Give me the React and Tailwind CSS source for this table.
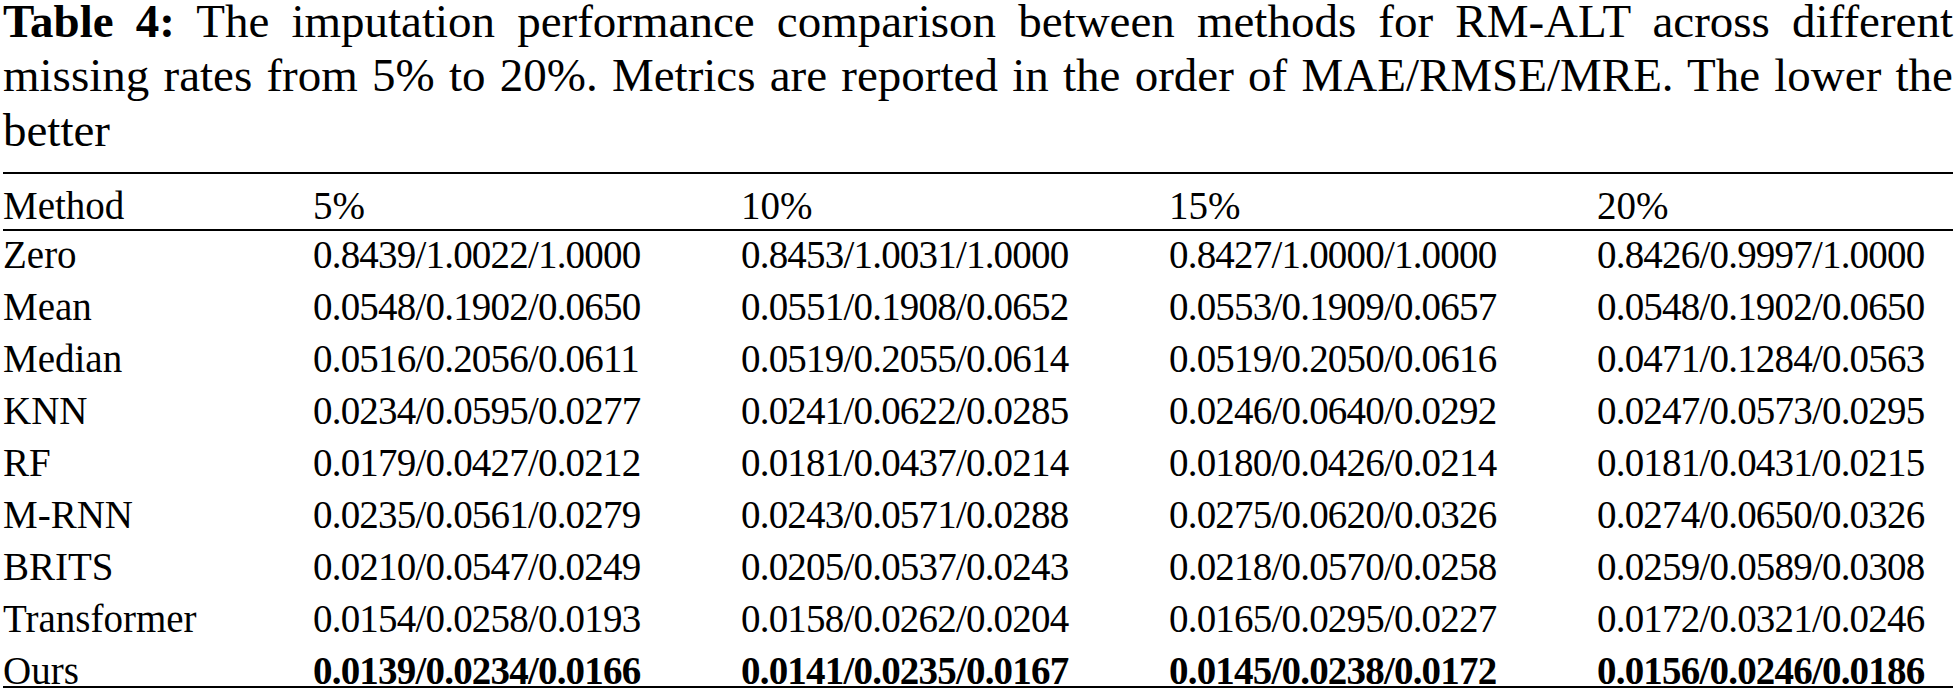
import React from 'react';

const rows = [
    ['Zero', '0.8439/1.0022/1.0000', '0.8453/1.0031/1.0000', '0.8427/1.0000/1.0000', '0.8426/0.9997/1.0000'],
    ['Mean', '0.0548/0.1902/0.0650', '0.0551/0.1908/0.0652', '0.0553/0.1909/0.0657', '0.0548/0.1902/0.0650'],
    ['Median', '0.0516/0.2056/0.0611', '0.0519/0.2055/0.0614', '0.0519/0.2050/0.0616', '0.0471/0.1284/0.0563'],
    ['KNN', '0.0234/0.0595/0.0277', '0.0241/0.0622/0.0285', '0.0246/0.0640/0.0292', '0.0247/0.0573/0.0295'],
    ['RF', '0.0179/0.0427/0.0212', '0.0181/0.0437/0.0214', '0.0180/0.0426/0.0214', '0.0181/0.0431/0.0215'],
    ['M-RNN', '0.0235/0.0561/0.0279', '0.0243/0.0571/0.0288', '0.0275/0.0620/0.0326', '0.0274/0.0650/0.0326'],
    ['BRITS', '0.0210/0.0547/0.0249', '0.0205/0.0537/0.0243', '0.0218/0.0570/0.0258', '0.0259/0.0589/0.0308'],
    ['Transformer', '0.0154/0.0258/0.0193', '0.0158/0.0262/0.0204', '0.0165/0.0295/0.0227', '0.0172/0.0321/0.0246'],
];

const ours = ['Ours', '0.0139/0.0234/0.0166', '0.0141/0.0235/0.0167', '0.0145/0.0238/0.0172', '0.0156/0.0246/0.0186'];

const cols = 'grid grid-cols-[310px_428px_428px_428px_1fr]';

export default function App() {
    return (
        <div className="w-[1954px] h-[696px] overflow-hidden bg-white pl-[3px] pr-[1px] text-black font-['Liberation_Serif','Times_New_Roman',serif]">
            <div className="text-[47px]">
                <p className="leading-[43px] text-justify [text-align-last:justify]">
                    <span className="font-bold">Table 4:</span> The imputation performance comparison between methods for RM-ALT across different
                </p>
                <p className="mt-[5px] leading-[55px] text-justify [text-align-last:justify]">
                    missing rates from 5% to 20%. Metrics are reported in the order of MAE/RMSE/MRE. The lower the
                </p>
                <p className="leading-[55px]">better</p>
            </div>

            <div className="mt-[14px] border-t-2 border-black text-[39px]">
                <div className={`${cols} border-b-2 border-black pt-[9px] leading-[46px]`}>
                    <div>Method</div>
                    <div>5%</div>
                    <div>10%</div>
                    <div>15%</div>
                    <div>20%</div>
                </div>

                {rows.map((r) => (
                    <div key={r[0]} className={`${cols} h-[52px] leading-[48px]`}>
                        <div>{r[0]}</div>
                        {r.slice(1).map((v, i) => (
                            <div key={i} className="tracking-[-0.8px]">{v}</div>
                        ))}
                    </div>
                ))}

                <div className={`${cols} h-[41px] leading-[48px] border-b-2 border-black`}>
                    <div>{ours[0]}</div>
                    {ours.slice(1).map((v, i) => (
                        <div key={i} className="font-bold tracking-[-0.8px]">{v}</div>
                    ))}
                </div>
            </div>
        </div>
    );
}
